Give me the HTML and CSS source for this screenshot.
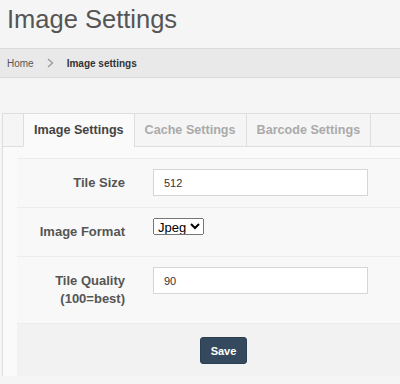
FILE: index.html
```html
<!DOCTYPE html>
<html lang="en">
<head>
  <meta charset="UTF-8" />
  <title>Image Settings</title>
  <link rel="stylesheet" href="styles.css">
</head>
<body>

  <h1 class="page-title">Image Settings</h1>

  <nav class="breadcrumb">
    <a href="#">Home</a>
    <svg class="crumb-sep" width="7" height="10" viewBox="0 0 7 10"><polyline points="1,1 5.5,5 1,9" fill="none" stroke="#999" stroke-width="1.3"/></svg>
    <span>Image settings</span>
  </nav>

  <div class="panel">
    <ul class="tabs">
      <li class="tab active">Image Settings</li>
      <li class="tab">Cache Settings</li>
      <li class="tab">Barcode Settings</li>
    </ul>

    <form class="settings-form">
      <div class="form-row">
        <label class="form-label">Tile Size</label>
        <input type="text" class="form-input" value="512">
      </div>
      <div class="form-row">
        <label class="form-label">Image Format</label>
        <div><select class="form-select"><option>Jpeg</option><option>Png</option></select></div>
      </div>
      <div class="form-row">
        <label class="form-label">Tile Quality<br>(100=best)</label>
        <input type="text" class="form-input" value="90">
      </div>
      <div class="form-actions">
        <button type="button" class="btn-save">Save</button>
      </div>
    </form>
  </div>

</body>
</html>
```

FILE: styles.css
```css
* { margin:0; padding:0; box-sizing:border-box; font-family:'Liberation Sans', Arial, sans-serif; }
body { background:#f5f5f5; overflow:hidden; }

.page-title { font-size:25.5px; line-height:30px; font-weight:normal; color:#555; margin:4px 0 14px 7px; }

.breadcrumb {
  background:#e9e9e9; border-top:1px solid #dadada; border-bottom:1px solid #dadada;
  height:30px; padding:0 7px; display:flex; align-items:center; gap:13px; font-size:10px;
}
.breadcrumb a { color:#555; text-decoration:none; }
.breadcrumb span { color:#333; font-weight:bold; }
.crumb-sep { display:block; }

.panel { margin:35px 0 0 2px; width:442px; background:#fafafa; border-left:1px solid #dedede; border-top:1px solid #dedede; }

.tabs { list-style:none; display:flex; padding-left:20px; border-bottom:1px solid #dedede; background:#f5f5f5; }
.tab {
  padding:9px 10px 8px; font-size:12.6px; line-height:15px; font-weight:bold; color:#aaa;
  border-left:1px solid #dedede; margin-bottom:-1px; border-bottom:1px solid #dedede;
}
.tab:last-child { border-right:1px solid #dedede; }
.tab.active { color:#444; background:#fafafa; border-bottom-color:#fafafa; }

.settings-form { padding:11px 14px 0; }
.form-row {
  display:grid; grid-template-columns:108px 215px; column-gap:28px; align-items:start;
  padding:10px 0; border-top:1px solid #ececec; background:#f8f8f8;
}
.form-label { text-align:right; font-size:13px; line-height:18px; padding:5px 0; font-weight:bold; color:#555; }
.form-input { height:27px; border:1px solid #d6d6d6; background:#fff; padding:0 10px; font-size:11px; color:#333; }
.form-select { font-size:13px; height:17px; padding:0; margin-top:0; font-family:'Liberation Sans', Arial, sans-serif; color:#000; }

.form-actions { background:#f2f2f2; border-top:1px solid #ececec; padding:13px 0 12px; text-align:center; }
.btn-save {
  background:#34495e; color:#fff; border:1px solid #2c3e50; border-radius:3px;
  height:27px; padding:0 10px; font-size:11px; font-weight:bold;
}
```
